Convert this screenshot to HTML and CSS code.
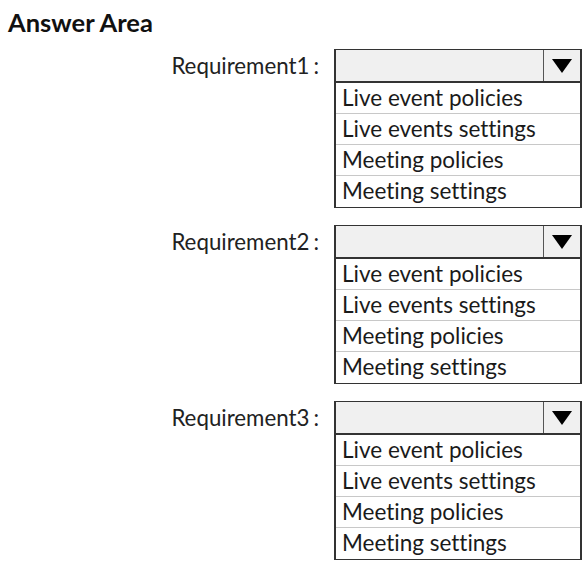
FILE: index.html
```html
<!DOCTYPE html>
<html>
<head>
<meta charset="utf-8">
<link rel="stylesheet" href="styles.css">
</head>
<body>
<h1 class="title">Answer Area</h1>
<div class="groups">
  <div class="group">
    <div class="label">Requirement1<span class="colon">:</span></div>
    <div class="dropdown">
      <div class="head"><div class="field"></div><div class="arrow"><span class="tri"></span></div></div>
      <div class="opt">Live event policies</div>
      <div class="opt">Live events settings</div>
      <div class="opt">Meeting policies</div>
      <div class="opt last">Meeting settings</div>
    </div>
  </div>
  <div class="group">
    <div class="label">Requirement2<span class="colon">:</span></div>
    <div class="dropdown">
      <div class="head"><div class="field"></div><div class="arrow"><span class="tri"></span></div></div>
      <div class="opt">Live event policies</div>
      <div class="opt">Live events settings</div>
      <div class="opt">Meeting policies</div>
      <div class="opt last">Meeting settings</div>
    </div>
  </div>
  <div class="group">
    <div class="label">Requirement3<span class="colon">:</span></div>
    <div class="dropdown">
      <div class="head"><div class="field"></div><div class="arrow"><span class="tri"></span></div></div>
      <div class="opt">Live event policies</div>
      <div class="opt">Live events settings</div>
      <div class="opt">Meeting policies</div>
      <div class="opt last">Meeting settings</div>
    </div>
  </div>
</div>
</body>
</html>
```
FILE: styles.css
```css
* { box-sizing: border-box; }
html, body { background: #fff; }
body {
  margin: 0;
  padding: 6px 0 0 8px;
  font-family: Lato, "Open Sans", sans-serif;
  font-variant-ligatures: none;
  color: #1a1a1a;
}
.title {
  margin: 0;
  font-size: 25.5px;
  font-weight: 700;
  line-height: 32px;
  color: #111;
}
.groups {
  display: flex;
  flex-direction: column;
  gap: 17px;
  margin-top: 11px;
}
.group {
  display: flex;
  align-items: flex-start;
}
.label {
  width: 326px;
  text-align: right;
  padding-right: 15px;
  font-size: 22.3px;
  line-height: 33px;
  color: #222;
}
.colon { margin-left: 4px; }
.dropdown {
  width: 248px;
  border: 2px solid #333;
  border-top-width: 1px;
  border-bottom-width: 1px;
}
.head {
  display: flex;
  height: 33px;
  background: #f0f0f0;
  border-bottom: 2px solid #333;
}
.field { flex: 1; }
.arrow {
  width: 37px;
  border-left: 1px solid #555;
  display: flex;
  align-items: center;
  justify-content: center;
}
.tri {
  width: 0;
  height: 0;
  border-left: 10px solid transparent;
  border-right: 10px solid transparent;
  border-top: 14px solid #000;
}
.opt {
  height: 31px;
  line-height: 30px;
  padding-left: 6px;
  font-size: 22.5px;
  color: #1a1a1a;
  border-bottom: 1px solid #c8c8c8;
}
.opt.last { border-bottom: none; }
```
